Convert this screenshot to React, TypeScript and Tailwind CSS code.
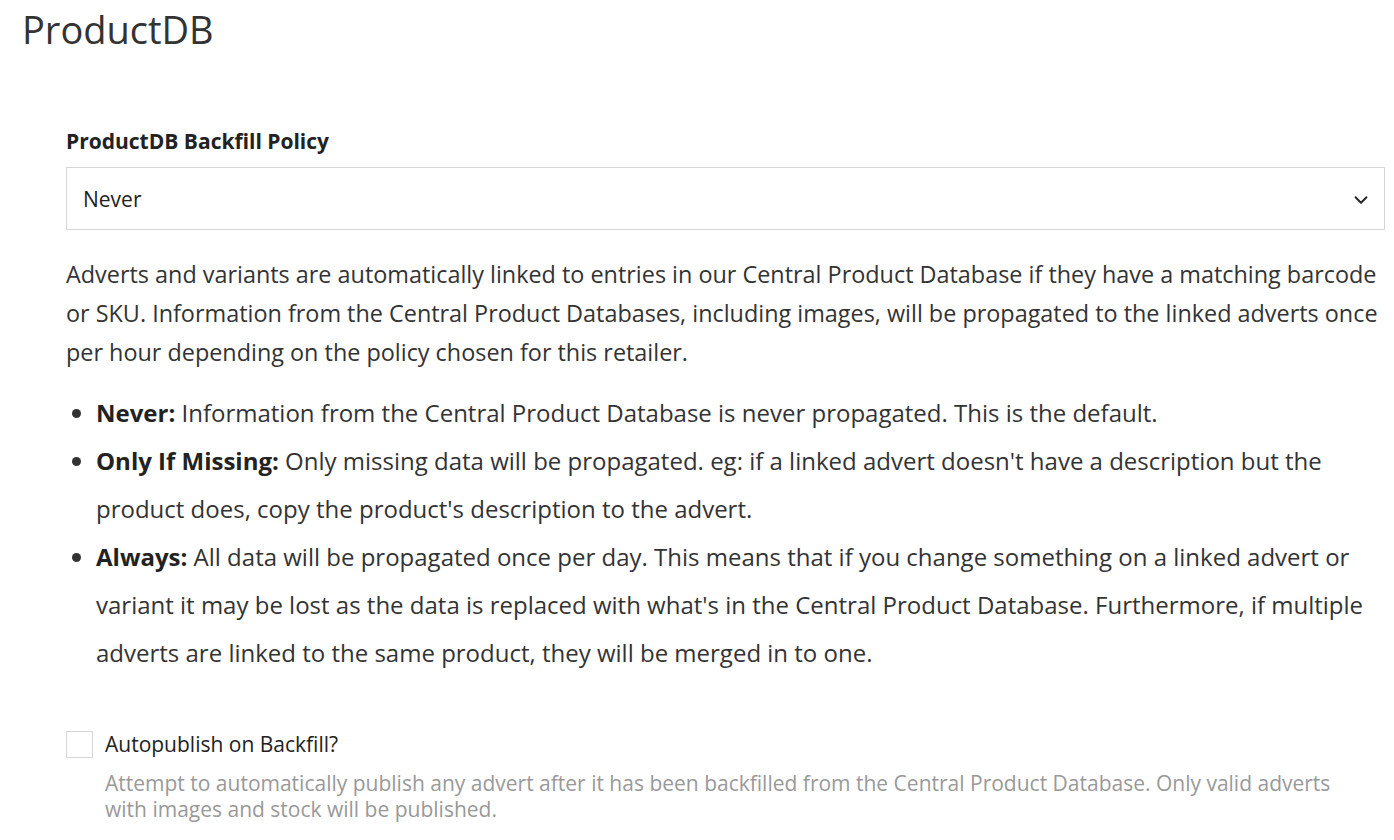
import { ChevronDown } from "lucide-react";

const policies = [
  {
    name: "Never:",
    text: "Information from the Central Product Database is never propagated. This is the default.",
  },
  {
    name: "Only If Missing:",
    text: "Only missing data will be propagated. eg: if a linked advert doesn't have a description but the product does, copy the product's description to the advert.",
  },
  {
    name: "Always:",
    text: "All data will be propagated once per day. This means that if you change something on a linked advert or variant it may be lost as the data is replaced with what's in the Central Product Database. Furthermore, if multiple adverts are linked to the same product, they will be merged in to one.",
  },
];

export default function App() {
  return (
    <div className="min-h-screen bg-white text-[#333] font-['Open_Sans',sans-serif]">
      <h1 className="pl-[22px] pt-[5px] text-[38px] leading-[48px] text-[#333]">ProductDB</h1>

      <div className="pl-[66px] pr-[9px] pt-[74px]">
        {/* Backfill policy select */}
        <label className="block text-[21px] font-bold leading-[28px] text-[#222]">
          ProductDB Backfill Policy
        </label>
        <div className="mt-[12px] flex h-[63px] items-center justify-between border border-[#d6d6d6] bg-white pl-[16px] pr-[12px]">
          <span className="mt-[3px] text-[21px] text-[#222]">Never</span>
          <ChevronDown className="mt-[2px] h-[22px] w-[22px] text-[#222]" strokeWidth={2} />
        </div>

        <p className="mt-[25px] text-[23.4px] leading-[39px] text-[#333]">
          Adverts and variants are automatically linked to entries in our Central Product Database if they have a
          matching barcode or SKU. Information from the Central Product Databases, including images, will be
          propagated to the linked adverts once per hour depending on the policy chosen for this retailer.
        </p>

        <ul className="mt-[17px] list-disc pl-[30px] text-[24px] leading-[48px] text-[#333]">
          {policies.map((p) => (
            <li key={p.name}>
              <b className="font-bold text-[#222]">{p.name}</b> {p.text}
            </li>
          ))}
        </ul>

        {/* Autopublish checkbox */}
        <div className="mt-[53px] flex gap-[12px]">
          <div className="mt-[1px] h-[27px] w-[27px] shrink-0 border border-[#d6d6d6] bg-white" />
          <div>
            <div className="text-[21px] leading-[28px] text-[#222]">Autopublish on Backfill?</div>
            <p className="mt-[12px] pr-[40px] text-[21px] leading-[26px] text-[#999]">
              Attempt to automatically publish any advert after it has been backfilled from the Central Product
              Database. Only valid adverts with images and stock will be published.
            </p>
          </div>
        </div>
      </div>
    </div>
  );
}
